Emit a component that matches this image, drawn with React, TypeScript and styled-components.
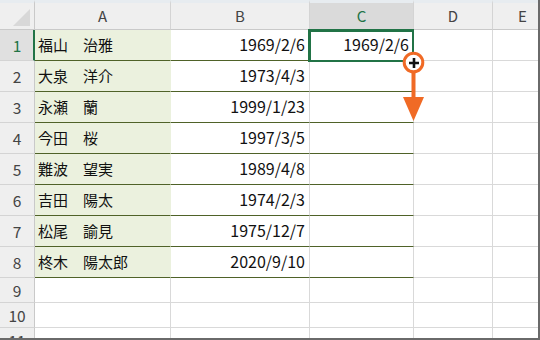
import React from 'react'
import styled, { createGlobalStyle, css } from 'styled-components'

const GlobalStyle = createGlobalStyle`
  html, body {
    margin: 0;
    padding: 0;
    background: #fff;
    overflow: hidden;
  }
`

const grid = '#d9d9d9'
const olive = '#4f6228'
const excelGreen = '#217346'
const font = `"Noto Sans CJK JP", "Noto Sans", sans-serif`

const Frame = styled.div`
  position: relative;
  width: 540px;
  height: 340px;
  box-sizing: border-box;
  border-right: 2px solid #6a6a6a;
  border-bottom: 2px solid #6a6a6a;
  overflow: hidden;
  font-family: ${font};
  background: #fff;
`

const Sheet = styled.div`
  display: grid;
  grid-template-columns: 35px 136px 139px 104px 79px 60px;
  grid-template-rows: 30px repeat(8, 31px) repeat(3, 25px);
`

const Corner = styled.div`
  box-sizing: border-box;
  background: #efefef;
  border-top: 3px solid #e7ecf0;
  border-right: 1px solid #c9c9c9;
  border-bottom: 1px solid #c9c9c9;
  display: flex;
  align-items: flex-end;
  justify-content: flex-end;
  padding: 0 3px 2px 0;
`

const ColHead = styled.div<{ $active?: boolean }>`
  box-sizing: border-box;
  background: ${(p) => (p.$active ? '#dadada' : '#efefef')};
  color: ${(p) => (p.$active ? excelGreen : '#444')};
  border-top: 3px solid #e7ecf0;
  border-right: 1px solid #d4d4d4;
  border-bottom: 1px solid #c9c9c9;
  display: flex;
  align-items: center;
  justify-content: center;
  font-size: 15px;
  padding-bottom: 1px;
`

const RowHead = styled.div<{ $active?: boolean }>`
  box-sizing: border-box;
  background: ${(p) => (p.$active ? '#e0e0e0' : '#efefef')};
  color: ${(p) => (p.$active ? excelGreen : '#444')};
  border-right: ${(p) => (p.$active ? `2px solid ${excelGreen}` : '1px solid #c9c9c9')};
  border-bottom: 1px solid #d4d4d4;
  display: flex;
  align-items: center;
  justify-content: center;
  font-size: 15.5px;
  padding-left: ${(p) => (p.$active ? '1px' : '0')};
`

const Cell = styled.div<{ $name?: boolean; $date?: boolean; $table?: boolean }>`
  box-sizing: border-box;
  border-right: 1px solid ${grid};
  border-bottom: 1px solid ${grid};
  display: flex;
  align-items: center;
  font-size: 15px;
  color: #111;
  white-space: nowrap;
  padding: 0 4px 2px 3px;
  ${(p) =>
    p.$table &&
    css`
      border-bottom-color: ${olive};
    `}
  ${(p) =>
    p.$name &&
    css`
      background: #ebf1de;
      border-right-color: #ebf1de;
    `}
  ${(p) =>
    p.$date &&
    css`
      justify-content: flex-end;
      font-size: 16px;
    `}
`

const Selection = styled.div`
  position: absolute;
  left: 308px;
  top: 29px;
  width: 106px;
  height: 33px;
  box-sizing: border-box;
  border: 2px solid ${excelGreen};
  border-left-width: 3px;
  border-top-width: 3px;
  pointer-events: none;
`

const FillCursor = styled.svg`
  position: absolute;
  left: 400px;
  top: 49px;
  pointer-events: none;
`

const people: [string, string][] = [
  ['福山　治雅', '1969/2/6'],
  ['大泉　洋介', '1973/4/3'],
  ['永瀬　蘭', '1999/1/23'],
  ['今田　桜', '1997/3/5'],
  ['難波　望実', '1989/4/8'],
  ['吉田　陽太', '1974/2/3'],
  ['松尾　諭見', '1975/12/7'],
  ['柊木　陽太郎', '2020/9/10'],
]

const columns = ['A', 'B', 'C', 'D', 'E']

export default function App() {
  return (
    <>
      <GlobalStyle />
      <Frame>
        <Sheet>
          <Corner>
            <svg width="18" height="18" viewBox="0 0 18 18">
              <polygon points="0,17 17,17 17,0" fill="#d8d8d8" />
            </svg>
          </Corner>
          {columns.map((c) => (
            <ColHead key={c} $active={c === 'C'}>
              {c}
            </ColHead>
          ))}

          {people.map(([name, born], i) => (
            <React.Fragment key={name}>
              <RowHead $active={i === 0}>{i + 1}</RowHead>
              <Cell $name $table>
                {name}
              </Cell>
              <Cell $date $table>
                {born}
              </Cell>
              <Cell $date $table>
                {i === 0 ? born : ''}
              </Cell>
              <Cell />
              <Cell />
            </React.Fragment>
          ))}

          {[9, 10, 11].map((n) => (
            <React.Fragment key={n}>
              <RowHead>{n}</RowHead>
              <Cell />
              <Cell />
              <Cell />
              <Cell />
              <Cell />
            </React.Fragment>
          ))}
        </Sheet>

        <Selection />

        {/* fill handle cursor with the drag direction */}
        <FillCursor width="30" height="76" viewBox="0 0 30 76">
          <rect x="11.5" y="20" width="4" height="30" fill="#f06a25" />
          <polygon points="3,48 24,48 13.5,72" fill="#f06a25" />
          <circle cx="13.5" cy="13.5" r="9.3" fill="#fff" stroke="#f06a25" strokeWidth="3" />
          <path d="M9 14H19M14 9V19" stroke="#111" strokeWidth="2.6" />
        </FillCursor>
      </Frame>
    </>
  )
}
